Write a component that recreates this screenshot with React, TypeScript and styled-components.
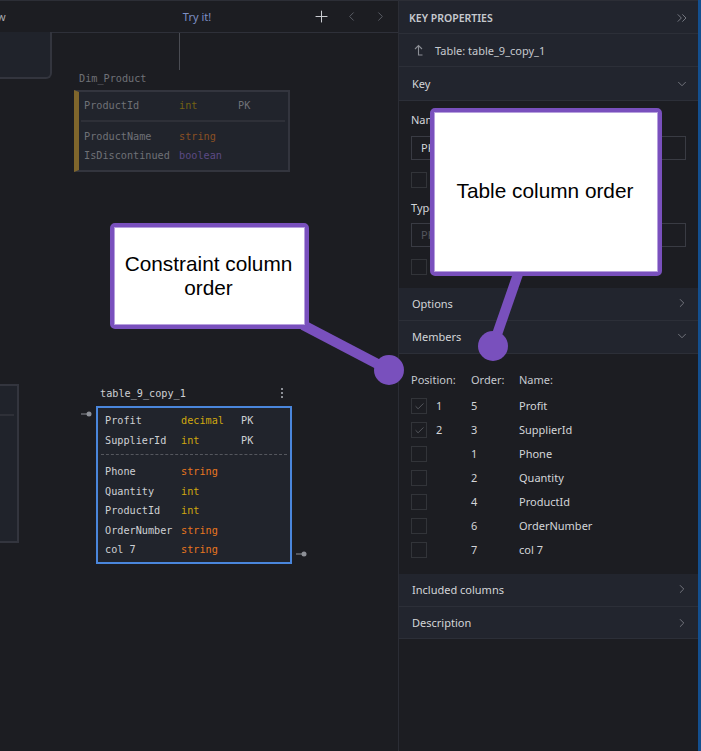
import React from "react";
import styled, { createGlobalStyle } from "styled-components";
import { ChevronDown, ChevronLeft, ChevronRight, ChevronsRight, Plus, Check } from "lucide-react";

const GlobalStyle = createGlobalStyle`
  html, body {
    margin: 0;
    height: 100%;
    background: #1c1d22;
    overflow: hidden;
  }
  * { box-sizing: border-box; }
`;

type Column = { name: string; type: string; key?: string };

const dimColumns: Column[][] = [
  [{ name: "ProductId", type: "int", key: "PK" }],
  [
    { name: "ProductName", type: "string" },
    { name: "IsDiscontinued", type: "boolean" },
  ],
];

const copyColumns: Column[][] = [
  [
    { name: "Profit", type: "decimal", key: "PK" },
    { name: "SupplierId", type: "int", key: "PK" },
  ],
  [
    { name: "Phone", type: "string" },
    { name: "Quantity", type: "int" },
    { name: "ProductId", type: "int" },
    { name: "OrderNumber", type: "string" },
    { name: "col 7", type: "string" },
  ],
];

const members = [
  { pos: "1", order: "5", name: "Profit" },
  { pos: "2", order: "3", name: "SupplierId" },
  { pos: "", order: "1", name: "Phone" },
  { pos: "", order: "2", name: "Quantity" },
  { pos: "", order: "4", name: "ProductId" },
  { pos: "", order: "6", name: "OrderNumber" },
  { pos: "", order: "7", name: "col 7" },
];

function TableRows({ columns, dim }: { columns: Column[]; dim?: boolean }) {
  return (
    <>
      {columns.map((c) => (
        <ColumnRow key={c.name} $dim={dim}>
          <span>{c.name}</span>
          <TypeName $type={c.type} $dim={dim}>
            {c.type}
          </TypeName>
          <span>{c.key}</span>
        </ColumnRow>
      ))}
    </>
  );
}

function Pin({ right }: { right?: boolean }) {
  return (
    <PinMark $right={right} width="11" height="6" viewBox="0 0 11 6">
      <path d="M0 3h6" stroke="#8d9097" strokeWidth="1" />
      <circle cx="8" cy="3" r="2.5" fill="#8d9097" />
    </PinMark>
  );
}

function Section({ title, open, height = 33 }: { title: string; open?: boolean; height?: number }) {
  return (
    <SectionHead $height={height}>
      <span>{title}</span>
      {open ? <ChevronDown size={14} strokeWidth={1.5} /> : <ChevronRight size={14} strokeWidth={1.5} />}
    </SectionHead>
  );
}

export default function App() {
  return (
    <Page>
      <GlobalStyle />
      <Canvas>
        <Toolbar>
          <ToolbarEdge>w</ToolbarEdge>
          <TryIt>Try it!</TryIt>
          <ToolIcons>
            <Plus size={19} color="#c9cbd0" strokeWidth={1.3} />
            <ChevronLeft size={15} color="#595c64" strokeWidth={1.6} />
            <ChevronRight size={15} color="#595c64" strokeWidth={1.6} />
          </ToolIcons>
        </Toolbar>

        <CutOffCard />
        <VerticalLine />

        <DimTitle>Dim_Product</DimTitle>
        <DimTable>
          <TableRows columns={dimColumns[0]} dim />
          <SolidRule />
          <TableRows columns={dimColumns[1]} dim />
        </DimTable>

        <LeftStub>
          <StubRule />
        </LeftStub>

        <CopyTitle>table_9_copy_1</CopyTitle>
        <MoreDots>
          <i />
          <i />
          <i />
        </MoreDots>
        <Pin />
        <CopyTable>
          <TableRows columns={copyColumns[0]} />
          <DashedRule />
          <TableRows columns={copyColumns[1]} />
        </CopyTable>
        <Pin right />
      </Canvas>

      <Panel>
        <PanelHead>
          <span>KEY PROPERTIES</span>
          <ChevronsRight size={16} color="#7b7e86" strokeWidth={1.4} />
        </PanelHead>
        <SourceRow>
          <svg width="10" height="12" viewBox="0 0 10 12" fill="none" stroke="#8b8e95" strokeWidth="1.1">
            <path d="M1 5l3.5-3.5L8 5M4.5 1.5V11H8.5" />
          </svg>
          <span>Table: table_9_copy_1</span>
        </SourceRow>
        <Section title="Key" open height={34} />
        <KeyBody>
          <FieldLabel>Name</FieldLabel>
          <FieldInput>PK</FieldInput>
          <CheckBox />
          <FieldLabel>Type</FieldLabel>
          <FieldInput $muted>PK</FieldInput>
          <CheckBox />
        </KeyBody>
        <Section title="Options" />
        <Section title="Members" open />
        <MembersBody>
          <MemberHeaderRow>
            <MemberHeader>Position:</MemberHeader>
            <MemberHeader>Order:</MemberHeader>
            <MemberHeader>Name:</MemberHeader>
          </MemberHeaderRow>
          {members.map((m) => (
            <MemberGrid key={m.name}>
              <PositionCell>
                <CheckBox>{m.pos && <Check size={11} color="#85888e" strokeWidth={1.2} />}</CheckBox>
                <span>{m.pos}</span>
              </PositionCell>
              <span>{m.order}</span>
              <span>{m.name}</span>
            </MemberGrid>
          ))}
        </MembersBody>
        <Section title="Included columns" />
        <Section title="Description" height={32} />
      </Panel>
      <BlueEdge />

      <Callout $left={430} $top={108} $width={232} $height={168} $lift={2}>
        Table column order
      </Callout>
      <Callout $left={110} $top={223} $width={199} $height={106} $lift={0}>
        Constraint column order
      </Callout>
      <Leaders width="701" height="751" viewBox="0 0 701 751">
        <path d="M518 274 L493 346" stroke="#7950bd" strokeWidth="10" />
        <circle cx="493" cy="346" r="15" fill="#7950bd" />
        <path d="M303 325 L389 370" stroke="#7950bd" strokeWidth="10" />
        <circle cx="389" cy="370" r="15" fill="#7950bd" />
      </Leaders>
    </Page>
  );
}

const Page = styled.div`
  position: relative;
  width: 701px;
  height: 751px;
  display: grid;
  grid-template-columns: 399px 299px 3px;
  font-family: "Noto Sans", "Open Sans", sans-serif;
  font-size: 11px;
  color: #d3d5d9;
  overflow: hidden;
`;

const Canvas = styled.div`
  position: relative;
  background: #1c1d22;
  border-top: 1px solid #2c2e36;
  border-right: 1px solid #2b2d35;
`;

const Toolbar = styled.div`
  height: 32px;
  border-bottom: 1px solid #2e3039;
  display: grid;
  grid-template-columns: 1fr auto 1fr;
  align-items: center;
`;

const ToolbarEdge = styled.span`
  color: #a7a9ae;
  margin-left: -3px;
`;

const TryIt = styled.span`
  color: #7d8fc4;
  font-size: 11px;
  margin-left: -4px;
`;

const ToolIcons = styled.div`
  display: flex;
  align-items: center;
  justify-content: flex-end;
  gap: 14px;
  padding-right: 10px;

  svg:first-child {
    margin-right: -1px;
  }
`;

const CutOffCard = styled.div`
  position: absolute;
  left: -10px;
  top: 31px;
  width: 62px;
  height: 47px;
  background: #20232b;
  border: 2px solid #33353e;
  border-top: 0;
  border-radius: 0 0 6px 6px;
`;

const VerticalLine = styled.div`
  position: absolute;
  left: 179px;
  top: 32px;
  width: 1px;
  height: 37px;
  background: #4a4c53;
`;

const TableTitle = styled.div`
  position: absolute;
  font-family: "DejaVu Sans Mono", monospace;
  font-size: 10.2px;
  line-height: 14px;
`;

const DimTitle = styled(TableTitle)`
  left: 79px;
  top: 71px;
  color: #6f7177;
`;

const CopyTitle = styled(TableTitle)`
  left: 100px;
  top: 386px;
  color: #ced0d4;
`;

const MoreDots = styled.div`
  position: absolute;
  left: 281px;
  top: 387px;
  display: flex;
  flex-direction: column;
  gap: 2px;

  i {
    display: block;
    width: 2px;
    height: 2px;
    background: #8d9097;
  }
`;

const PinMark = styled.svg<{ $right?: boolean }>`
  position: absolute;
  left: ${({ $right }) => ($right ? "296px" : "81px")};
  top: ${({ $right }) => ($right ? "550px" : "410px")};
`;

const TableBox = styled.div`
  position: absolute;
  background: #21242c;
  font-family: "DejaVu Sans Mono", monospace;
  font-size: 10.2px;
`;

const DimTable = styled(TableBox)`
  left: 74px;
  top: 89px;
  width: 216px;
  height: 82px;
  border: 2px solid #33353e;
  border-left: 5px solid #7f662c;
  padding: 4px 0 0 5px;
`;

const CopyTable = styled(TableBox)`
  left: 96px;
  top: 405px;
  width: 196px;
  height: 158px;
  border: 2px solid #4a86dc;
  padding: 3px 0 0 7px;
`;

const LeftStub = styled.div`
  position: absolute;
  left: -10px;
  top: 383px;
  width: 29px;
  height: 159px;
  background: #20232b;
  border: 2px solid #33353e;
`;

const StubRule = styled.div`
  height: 2px;
  margin: 28px 3px 0 0;
  background: #2e3038;
`;

const ColumnRow = styled.div<{ $dim?: boolean }>`
  display: grid;
  grid-template-columns: 76px 60px 1fr;
  height: 19.5px;
  line-height: 19.5px;
  white-space: nowrap;
  color: ${({ $dim }) => ($dim ? "#6f7177" : "#ced0d4")};

  ${DimTable} & {
    grid-template-columns: 95px 59px 1fr;
  }
`;

const typeColors: Record<string, [string, string]> = {
  int: ["#d0a80f", "#746214"],
  decimal: ["#d0a80f", "#746214"],
  string: ["#e8761f", "#8a5024"],
  boolean: ["#8d63c9", "#5c4a85"],
};

const TypeName = styled.span<{ $type: string; $dim?: boolean }>`
  color: ${({ $type, $dim }) => typeColors[$type][$dim ? 1 : 0]};
`;

const SolidRule = styled.div`
  height: 2px;
  margin: 4px 3px 5px -3px;
  background: #2e3038;
`;

const DashedRule = styled.div`
  margin: 4px 3px 7px -4px;
  border-top: 1px dashed #55575e;
`;

const Panel = styled.aside`
  background: #1c1d22;
  display: flex;
  flex-direction: column;
  border-top: 1px solid #2c2e36;
`;

const PanelHead = styled.div`
  height: 33px;
  flex: none;
  padding: 2px 8px 0 10px;
  display: flex;
  align-items: center;
  justify-content: space-between;
  background: #22252e;
  border-bottom: 1px solid #2c2f38;
  font-size: 10.5px;
  font-weight: 600;
  color: #c6c9cf;
`;

const SourceRow = styled.div`
  height: 33px;
  flex: none;
  padding: 0 0 0 15px;
  display: flex;
  align-items: center;
  gap: 11px;
  background: #22252e;
  border-bottom: 1px solid #2c2f38;
  color: #c6c9cf;
`;

const SectionHead = styled.div<{ $height: number }>`
  height: ${({ $height }) => $height}px;
  flex: none;
  padding: 0 9px ${({ $height }) => ($height === 33 ? 2 : 0)}px 13px;
  display: flex;
  align-items: center;
  justify-content: space-between;
  background: #22252e;
  border-bottom: 1px solid #2c2f38;
  color: #d3d5d9;

  svg {
    color: #7b7e86;
  }
`;

const KeyBody = styled.div`
  height: 187px;
  flex: none;
  padding: 12px 12px 0;
  display: flex;
  flex-direction: column;
`;

const FieldLabel = styled.div`
  height: 16px;
  line-height: 14px;
  margin-bottom: 7px;
`;

const FieldInput = styled.div<{ $muted?: boolean }>`
  height: 24px;
  line-height: 22px;
  padding-left: 9px;
  border: 1px solid #393b43;
  color: ${({ $muted }) => ($muted ? "#54565d" : "#d3d5d9")};
  margin-bottom: 12px;
`;

const CheckBox = styled.div`
  width: 16px;
  height: 16px;
  flex: none;
  display: flex;
  align-items: center;
  justify-content: center;
  border: 1px solid #323439;

  ${KeyBody} > & {
    margin-bottom: 13px;
  }
`;

const MembersBody = styled.div`
  height: 220px;
  flex: none;
  padding: 14px 12px 0;
`;

const MemberGrid = styled.div`
  display: grid;
  grid-template-columns: 60px 48px 1fr;
  height: 24px;
  align-items: center;

  span {
    margin-bottom: 2px;
  }
`;

const MemberHeaderRow = styled(MemberGrid)`
  margin-bottom: 2px;
`;

const MemberHeader = styled.span`
  color: #c6c9cf;
`;

const PositionCell = styled.div`
  display: flex;
  align-items: center;
  gap: 9px;
`;

const BlueEdge = styled.div`
  background: #134f8f;
`;

const Callout = styled.div<{ $left: number; $top: number; $width: number; $height: number; $lift: number }>`
  position: absolute;
  z-index: 3;
  left: ${({ $left }) => $left}px;
  top: ${({ $top }) => $top}px;
  width: ${({ $width }) => $width}px;
  height: ${({ $height }) => $height}px;
  padding: 0 12px ${({ $lift }) => $lift}px 10px;
  display: flex;
  align-items: center;
  justify-content: center;
  text-align: center;
  background: #fff;
  border: 4px solid #7950bd;
  border-radius: 5px;
  box-shadow: inset 0 0 0 1px #b7a0de;
  font-family: "Liberation Sans", Arial, sans-serif;
  font-size: 20.8px;
  line-height: 24px;
  color: #000;
`;

const Leaders = styled.svg`
  position: absolute;
  left: 0;
  top: 0;
  z-index: 2;
  pointer-events: none;
`;
